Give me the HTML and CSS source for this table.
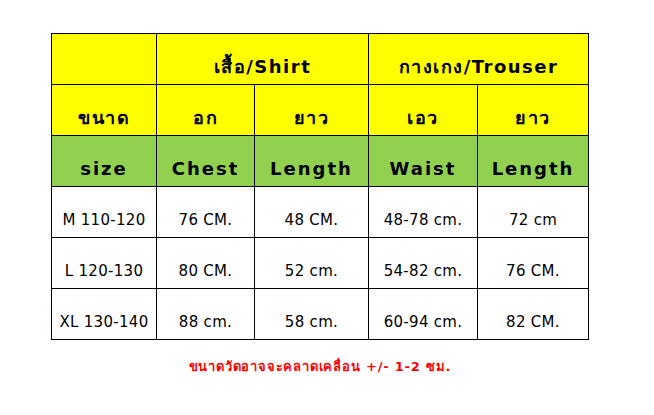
FILE: index.html
```html
<!DOCTYPE html>
<html lang="th">
<head>
<meta charset="utf-8">
<link rel="stylesheet" href="styles.css">
</head>
<body>
<div class="page">
  <table class="chart">
    <colgroup>
      <col class="c1"><col class="c2"><col class="c3"><col class="c4"><col class="c5">
    </colgroup>
    <tr class="yellow">
      <td></td>
      <td colspan="2">เสื้อ/Shirt</td>
      <td colspan="2">กางเกง/Trouser</td>
    </tr>
    <tr class="yellow">
      <td>ขนาด</td>
      <td>อก</td>
      <td>ยาว</td>
      <td>เอว</td>
      <td>ยาว</td>
    </tr>
    <tr class="green">
      <td>size</td>
      <td>Chest</td>
      <td>Length</td>
      <td>Waist</td>
      <td>Length</td>
    </tr>
    <tr class="data">
      <td>M 110-120</td>
      <td>76 CM.</td>
      <td>48 CM.</td>
      <td>48-78 cm.</td>
      <td>72 cm</td>
    </tr>
    <tr class="data">
      <td>L 120-130</td>
      <td>80 CM.</td>
      <td>52 cm.</td>
      <td>54-82 cm.</td>
      <td>76 CM.</td>
    </tr>
    <tr class="data">
      <td>XL 130-140</td>
      <td>88 cm.</td>
      <td>58 cm.</td>
      <td>60-94 cm.</td>
      <td>82 CM.</td>
    </tr>
  </table>
  <p class="note">ขนาดวัดอาจจะคลาดเคลื่อน +/- 1-2 ซม.</p>
</div>
</body>
</html>
```

FILE: styles.css
```css
html, body {
  margin: 0;
  padding: 0;
  background: #ffffff;
}
.page {
  padding: 33px 0 0 51px;
  width: 538px;
}
.chart {
  border-collapse: collapse;
  table-layout: fixed;
  width: 538px;
  font-family: "DejaVu Sans", "Noto Sans", sans-serif;
  color: #000;
}
.c1 { width: 105px; }
.c2 { width: 98px; }
.c3 { width: 114px; }
.c4 { width: 109px; }
.c5 { width: 111px; }
.chart td {
  border: 1px solid #000;
  height: 51px;
  padding: 0 0 7px 0;
  box-sizing: border-box;
  text-align: center;
  vertical-align: bottom;
  line-height: 20px;
  white-space: nowrap;
}
.yellow td {
  background: #ffff00;
  font-size: 18px;
  font-weight: bold;
  letter-spacing: 1.5px;
}
.green td {
  background: #92d050;
  font-size: 18px;
  font-weight: bold;
  letter-spacing: 2px;
}
.data td {
  font-size: 15px;
  letter-spacing: 0.3px;
}
.note {
  margin: 16px 0 0 0;
  text-align: center;
  color: #ff0000;
  font-family: "DejaVu Sans", "Noto Sans", sans-serif;
  font-size: 13px;
  font-weight: bold;
  letter-spacing: 0.8px;
}
```
